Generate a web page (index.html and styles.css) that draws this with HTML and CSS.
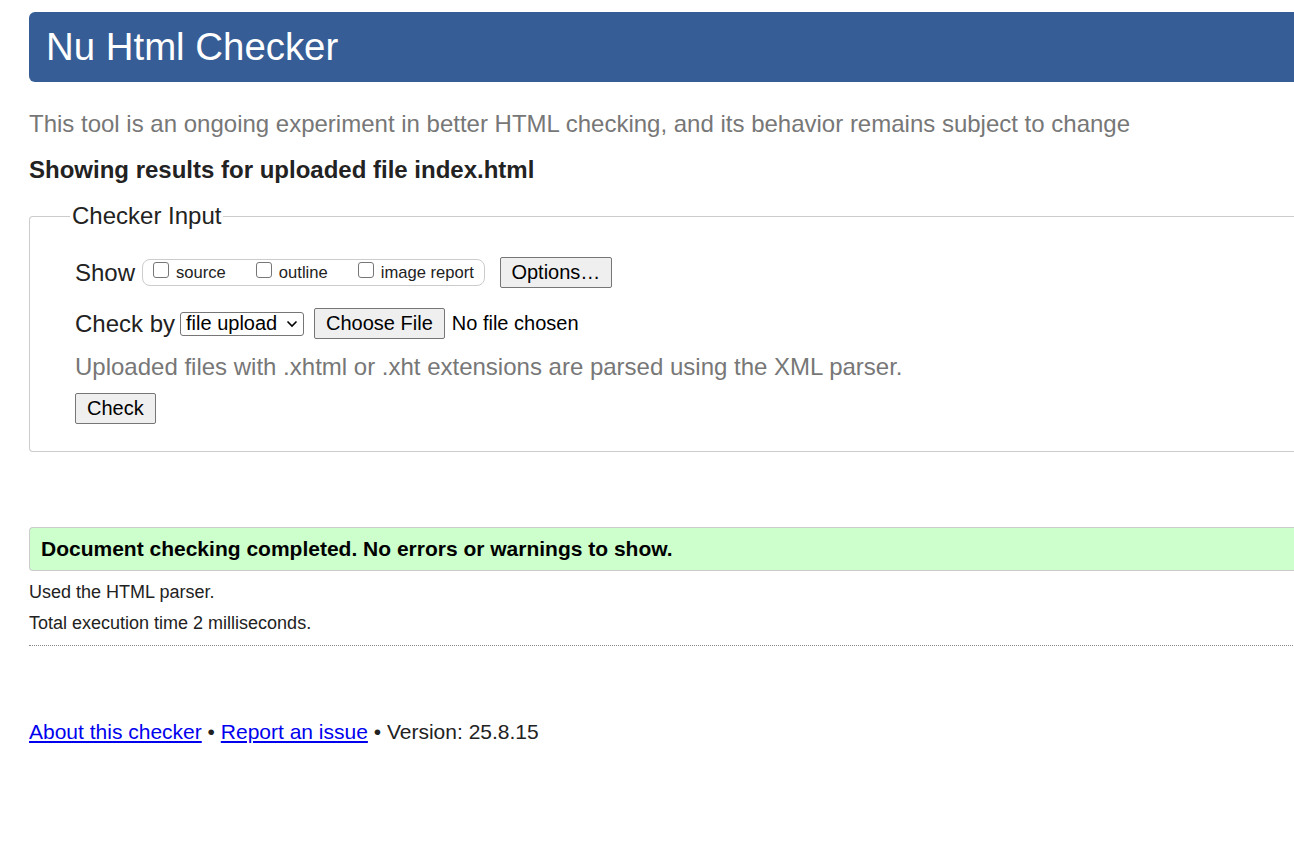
FILE: index.html
```html
<!DOCTYPE html>
<html lang="en">
<head>
<meta charset="utf-8">
<title>Nu Html Checker</title>
<link rel="stylesheet" href="styles.css">
</head>
<body>
<div class="page">
  <header class="banner"><h1>Nu Html Checker</h1></header>
  <p class="intro">This tool is an ongoing experiment in better HTML checking, and its behavior remains subject to change</p>
  <p class="showing">Showing results for uploaded file index.html</p>
  <fieldset class="input">
    <legend>Checker Input</legend>
    <div class="row show-row">
      <span class="label">Show</span>
      <span class="checks">
        <label class="cb"><span class="box"></span>source</label>
        <label class="cb"><span class="box"></span>outline</label>
        <label class="cb"><span class="box"></span>image report</label>
      </span>
      <button class="btn options">Options…</button>
    </div>
    <div class="row check-row">
      <span class="label">Check by</span>
      <span class="select">file upload<svg width="12" height="8" viewBox="0 0 12 8"><path d="M1.5 1.5 L6 6 L10.5 1.5" fill="none" stroke="#000" stroke-width="1.6"/></svg></span>
      <button class="btn choose">Choose File</button>
      <span class="nofile">No file chosen</span>
    </div>
    <p class="hint">Uploaded files with .xhtml or .xht extensions are parsed using the XML parser.</p>
    <button class="btn check">Check</button>
  </fieldset>
  <div class="success">Document checking completed. No errors or warnings to show.</div>
  <p class="info first">Used the HTML parser.</p>
  <p class="info">Total execution time 2 milliseconds.</p>
  <hr class="dotted">
  <p class="footer"><a href="#">About this checker</a> • <a href="#">Report an issue</a> • Version: 25.8.15</p>
</div>
</body>
</html>
```
FILE: styles.css
```css
html, body { margin: 0; padding: 0; overflow: hidden; background: #fff; }
body { font-family: "Liberation Sans", Arial, sans-serif; color: #222; font-size: 24px; }
.page { width: 1300px; padding: 12px 0 0 29px; }
.banner { background: #365d95; border-radius: 6px 0 0 6px; height: 70px; display: flex; align-items: center; padding-left: 17px; }
.banner h1 { margin: 0; color: #fff; font-weight: normal; font-size: 38.4px; line-height: 44px; }
.intro { margin: 28px 0 0; font-size: 24px; color: #777; line-height: 28px; }
.showing { margin: 18px 0 0; font-size: 24px; font-weight: bold; color: #222; line-height: 28px; }
.input { margin: 18px 0 0; border: 1px solid #ccc; border-right: none; border-radius: 4px 0 0 4px; padding: 27px 0 27px 45px; }
.input legend { font-size: 24px; line-height: 28px; padding: 0 2px; margin-left: -5px; color: #222; }
.row { display: flex; align-items: center; height: 31px; }
.label { font-size: 24px; color: #222; }
.checks { display: inline-flex; align-items: center; border: 1px solid #ccc; border-radius: 8px; height: 25px; margin-left: 7px; padding: 0 10px 0 10px; gap: 30px; }
.cb { display: inline-flex; align-items: center; font-size: 16.6px; color: #222; }
.box { width: 16px; height: 16px; box-sizing: border-box; border: 1px solid #767676; border-radius: 3px; margin-right: 7px; position: relative; top: -3px; }
.btn { font-family: "Liberation Sans", Arial, sans-serif; font-size: 20px; background: #efefef; border: 1px solid #767676; border-radius: 2px; color: #000; padding: 0 11px; }
.options { margin-left: 15px; height: 31px; padding: 0 10.5px; }
.check-row { margin-top: 20px; }
.select { display: inline-flex; align-items: center; justify-content: space-between; width: 124px; height: 24px; box-sizing: border-box; border: 1px solid #767676; border-radius: 3px; margin-left: 5px; padding: 0 5px 0 5px; font-size: 20px; color: #000; }
.choose { margin-left: 10px; height: 31px; }
.nofile { margin-left: 7px; font-size: 20px; color: #000; }
.hint { margin: 14px 0 0; font-size: 24px; color: #777; line-height: 28px; }
.check { margin-top: 12px; height: 31px; display: block; }
.success { margin-top: 75px; background: #ccffcc; border: 1px solid #ccc; border-right: none; border-radius: 4px 0 0 4px; height: 42px; display: flex; align-items: center; padding-left: 11px; font-size: 21px; font-weight: bold; color: #000; }
.info { margin: 9px 0 0; font-size: 18px; line-height: 22px; color: #222; }
.info.first { margin-top: 10px; }
.dotted { border: none; border-top: 1px dotted #888; margin: 11px 0 0; }
.footer { margin: 73px 0 0; font-size: 21px; line-height: 26px; color: #222; }
.footer a { color: #00e; }
```
